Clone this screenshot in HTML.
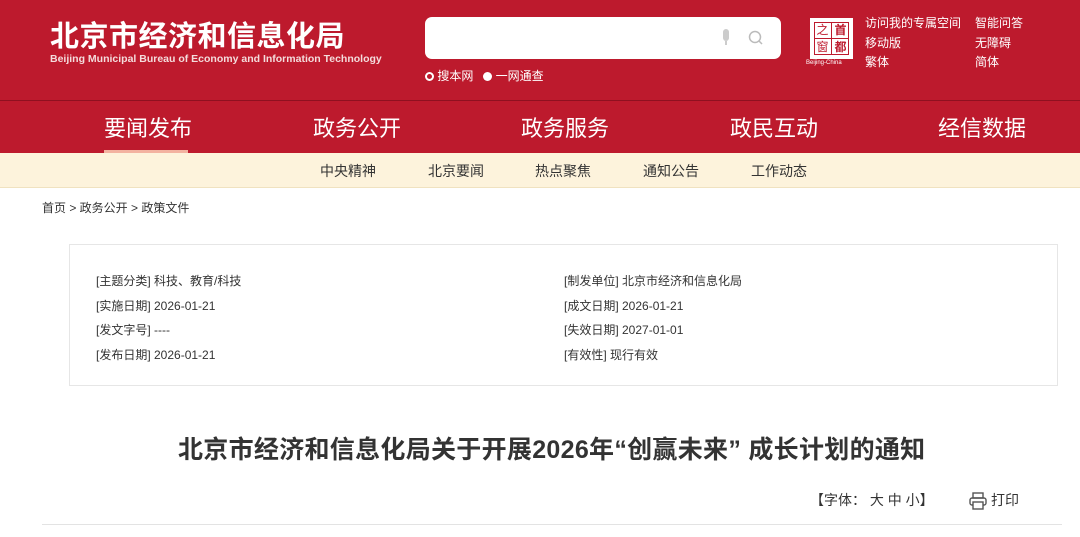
<!DOCTYPE html>
<html><head><meta charset="utf-8"><style>
*{margin:0;padding:0;box-sizing:border-box}
body{width:1080px;height:537px;overflow:hidden;background:#fff;font-family:"Liberation Sans","Noto Sans CJK SC",sans-serif;position:relative}
.a{position:absolute;white-space:nowrap}
.top{position:absolute;left:0;top:0;width:1080px;height:153px;background:#bd1a2d}
.line{position:absolute;left:0;top:100px;width:1080px;height:1px;background:#8f1020}
.sub{position:absolute;left:0;top:153px;width:1080px;height:35px;background:#fdf3dc;border-bottom:1px solid #f0e2c0}
.nav{color:#fff;font-size:22px;top:111px}
.sn{color:#333;font-size:14px;top:161px}
.info{font-size:12px;color:#333}
</style></head><body>
<div class="top"></div><div class="line"></div>
<div class="a" style="left:50px;top:13px;color:#fff;font-size:29px;font-weight:bold;letter-spacing:0.5px">北京市经济和信息化局</div>
<div class="a" style="left:50px;top:53px;color:#f4dcdc;font-size:10.5px;font-weight:bold">Beijing Municipal Bureau of Economy and Information Technology</div>
<div class="a" style="left:425px;top:17px;width:356px;height:42px;background:#fff;border-radius:7px"></div>
<svg class="a" style="left:718px;top:28px" width="50" height="20"><rect x="5" y="1" width="6" height="12" rx="3" fill="#ccc"/><rect x="7" y="13" width="2" height="4" fill="#ccc"/><circle cx="37" cy="9" r="5.5" fill="none" stroke="#bbb" stroke-width="1.5"/><line x1="41" y1="13" x2="44" y2="16" stroke="#bbb" stroke-width="1.5"/></svg>
<div class="a" style="left:425px;top:67px;color:#fff;font-size:12px"><span style="display:inline-block;width:9px;height:9px;border:2px solid #fff;border-radius:50%;vertical-align:-1px"></span> 搜本网 &nbsp;&nbsp;<span style="display:inline-block;width:9px;height:9px;background:#fff;border-radius:50%;vertical-align:-1px"></span> 一网通查</div>
<div class="a" style="left:810px;top:18px;width:43px;height:41px;background:#fff;border:2px solid #fff;color:#bd1a2d;font-size:12px;line-height:18px;text-align:center">
<div style="position:absolute;left:2px;top:2px;width:35px;height:33px;border:1px solid #bd1a2d"></div>
<div style="position:absolute;left:19px;top:2px;width:1px;height:33px;background:#bd1a2d"></div>
<div style="position:absolute;left:2px;top:18px;width:35px;height:1px;background:#bd1a2d"></div>
<div style="position:absolute;left:2px;top:1px;width:17px">之</div><div style="position:absolute;left:20px;top:1px;width:17px;font-weight:bold">首</div>
<div style="position:absolute;left:2px;top:18px;width:17px">窗</div><div style="position:absolute;left:20px;top:18px;width:17px;font-weight:bold">都</div></div>
<div class="a" style="left:806px;top:60px;color:#fff;font-size:6px">Beijing-China</div>
<div class="a" style="left:865px;top:14px;color:#fff;font-size:12px;line-height:19.5px">访问我的专属空间<br>移动版<br>繁体</div>
<div class="a" style="left:975px;top:14px;color:#fff;font-size:12px;line-height:19.5px">智能问答<br>无障碍<br>简体</div>
<div class="a nav" style="left:104px">要闻发布</div>
<div class="a" style="left:104px;top:150px;width:84px;height:3px;background:#f3b2a0"></div>
<div class="a nav" style="left:313px">政务公开</div>
<div class="a nav" style="left:521px">政务服务</div>
<div class="a nav" style="left:730px">政民互动</div>
<div class="a nav" style="left:938px">经信数据</div>
<div class="sub"></div>
<div class="a sn" style="left:320px">中央精神</div>
<div class="a sn" style="left:428px">北京要闻</div>
<div class="a sn" style="left:535px">热点聚焦</div>
<div class="a sn" style="left:643px">通知公告</div>
<div class="a sn" style="left:751px">工作动态</div>
<div class="a" style="left:42px;top:199px;font-size:12px;color:#333">首页 &gt; 政务公开 &gt; 政策文件</div>
<div class="a" style="left:69px;top:244px;width:989px;height:142px;border:1px solid #e6e6e6"></div>
<div class="a info" style="left:96px;top:269px;line-height:24.5px">[主题分类] 科技、教育/科技<br>[实施日期] 2026-01-21<br>[发文字号] ----<br>[发布日期] 2026-01-21</div>
<div class="a info" style="left:564px;top:269px;line-height:24.5px">[制发单位] 北京市经济和信息化局<br>[成文日期] 2026-01-21<br>[失效日期] 2027-01-01<br>[有效性] 现行有效</div>
<div class="a" style="left:178px;top:430px;font-size:25px;font-weight:bold;color:#333;letter-spacing:0.3px">北京市经济和信息化局关于开展2026年“创赢未来” 成长计划的通知</div>
<div class="a" style="left:810px;top:490px;font-size:14px;color:#333">【字体： 大 中 小】</div>
<svg class="a" style="left:968px;top:491px" width="20" height="20"><rect x="5" y="2" width="10" height="5" fill="none" stroke="#555" stroke-width="1.4"/><rect x="2" y="7" width="16" height="7" rx="2" fill="none" stroke="#555" stroke-width="1.4"/><rect x="5" y="11" width="10" height="7" fill="#fff" stroke="#555" stroke-width="1.4"/></svg>
<div class="a" style="left:991px;top:490px;font-size:14px;color:#333">打印</div>
<div class="a" style="left:42px;top:524px;width:1020px;height:1px;background:#e3e3e3"></div>
</body></html>
